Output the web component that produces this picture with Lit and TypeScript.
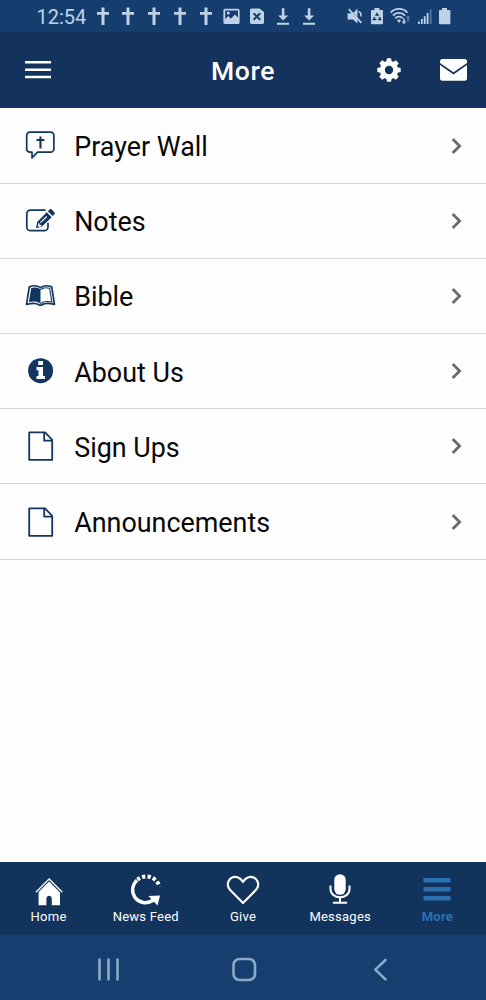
import { LitElement, html, css, svg } from "lit";
import { customElement } from "lit/decorators.js";

const statusIcon = (w: number, body: unknown) =>
  html`<svg width=${w} height="20" viewBox="0 0 ${w} 20" fill="currentColor">${body}</svg>`;

const cross = statusIcon(12, svg`<path d="M4.500 .5h3v4.500H12v2.800H7.500v10.300h-3V7.800H0V5h4.500z"/>`);
const picture = statusIcon(17, svg`<path fill-rule="evenodd" d="M2 1.800h13a1.600 1.600 0 0 1 1.600 1.600v12a1.600 1.600 0 0 1-1.600 1.600H2a1.600 1.600 0 0 1-1.600-1.600v-12A1.600 1.600 0 0 1 2 1.800zM2.200 3.500v8.700l3-3.200 2.600 2.700 4.200-4.200 3 3V3.500z"/><circle cx="5.300" cy="6" r="1.500"/>`);
const fileX = statusIcon(14, svg`<path d="M1.500 1.400h8L14 5v10.600a1.400 1.400 0 0 1-1.400 1.400H1.400A1.400 1.400 0 0 1 0 15.600V2.900a1.500 1.500 0 0 1 1.500-1.500z"/><path d="M3.600 6.200l6.600 6.600M10.200 6.200l-6.600 6.600" stroke="#153e6f" stroke-width="2"/>`);
const download = statusIcon(12, svg`<path d="M4.800 1.300h2.600v7.200h3.700L6.100 13.400 1.100 8.500h3.700zM0 15.800h12v1.900H0z"/>`);
const mute = statusIcon(16, svg`<path d="M.6 6.200h4.200l5.600 5.500v4.700L6 12.400H.6zM10.500 1.500v8.400L6.400 5.800z"/><path d="M1.800 2.200l12.600 13.600" fill="none" stroke="currentColor" stroke-width="1.700"/><path d="M11.600 4.500c1.800.8 2.800 2.700 2.200 5" fill="none" stroke="currentColor" stroke-width="1.500"/>`);
const recycle = statusIcon(12, svg`<path d="M3.500 1h5v2H11a1 1 0 0 1 1 1v12.300a1 1 0 0 1-1 1H1a1 1 0 0 1-1-1V4a1 1 0 0 1 1-1h2.500z"/><path d="M4.700 8.800L6 6.600l1.400 2.300M8.300 10.200l1.300 2.300H7M5.400 12.500h-3l1.400-2.400" fill="none" stroke="#153e6f" stroke-width="1.500"/>`);
const wifi = statusIcon(20, svg`<g fill="none" stroke="currentColor" stroke-width="1.700"><path d="M.6 5.600C5 .6 13 .6 17.400 5.600M3 8.600c3.200-3.700 8.800-3.700 12 0M5.300 11.400c2-2.300 5.400-2.300 7.400 0"/></g><path d="M7 13.200c1.200-1 2.800-1 4 0L9 15.900z"/><path d="M13.200 11.400h1.500v3h1.600l-2.300 2.900-2.400-2.900h1.600z"/><path d="M17.300 14.500h1.400v-3.200h1.200L18 8.600l-1.900 2.700h1.200z" opacity=".5"/>`);
const signal = statusIcon(14, svg`<path d="M0 14.500h1.800V17H0zM2.900 12h1.800v5H2.900zM5.800 9.300h1.800V17H5.800zM8.700 6h1.800v11H8.700z"/><path d="M11.800 2.400h1.700V17h-1.700z" opacity=".4"/>`);
const battery = statusIcon(12, svg`<path d="M3 1h5v2h2.400a1 1 0 0 1 1 1v12.200a1 1 0 0 1-1 1H1a1 1 0 0 1-1-1V4a1 1 0 0 1 1-1h2z"/>`);

const rowIcon = (body: unknown) =>
  html`<svg class="row-icon" width="33" height="34" viewBox="24 128 33 34" fill="currentColor">${body}</svg>`;

const page = rowIcon(svg`<g fill="none" stroke="currentColor" stroke-width="1.800" stroke-linejoin="round"><path d="M29.200 131.400H45l7.200 7.400v20H29.200z"/><path d="M44.200 131.400v8.300h8"/></g>`);

const rows = [
  { label: "Prayer Wall", icon: rowIcon(svg`<path d="M30 131.200h20.500a3.400 3.400 0 0 1 3.400 3.400v13.200a3.400 3.400 0 0 1-3.400 3.400H37.600L32 156.800v-5.600h-2a3.300 3.300 0 0 1-3.300-3.400v-13.200a3.300 3.300 0 0 1 3.300-3.400z" fill="none" stroke="currentColor" stroke-width="1.700" stroke-linejoin="round"/><path d="M39.400 135.400h2.100v2.700h2.900v1.800h-2.900v7.500h-2.100v-7.500h-2.900v-1.800h2.900z"/>`) },
  { label: "Notes", icon: rowIcon(svg`<path d="M45 134.100H30.600a3.800 3.800 0 0 0-3.800 3.800v13a3.800 3.800 0 0 0 3.800 3.800h13.600a3.800 3.800 0 0 0 3.800-3.800v-3.600" fill="none" stroke="currentColor" stroke-width="1.700" stroke-linecap="round"/><path fill-rule="evenodd" d="M46.700 136.300l5 4.900-9.800 9.400-5.900 1.700 1.200-6.200zM40 146.200l.8.800 6.300-6.100-.8-.8zM38.400 147l-.5 2.900 1.300 1.100 2.100-.8v-1.200l-1.700-.2-.2-1.600z"/><path d="M47.800 135.300l2-1.800c.6-.6 1.300-.5 1.900 0l2.600 2.700c.6.700.6 1.400 0 2l-1.700 1.900z"/>`) },
  { label: "Bible", icon: rowIcon(svg`<path d="M29.300 135.900c3.500-1.400 8-1.500 11.200.7 3.200-2.200 7.700-2.100 11.200-.7l2.800 17.600c-4.500-1.300-9.600-1.500-12.400.3-.6.500-2.600.5-3.200 0-2.800-1.800-7.900-1.600-12.400-.3z" fill="none" stroke="currentColor" stroke-width="1.700" stroke-linejoin="round"/><path d="M31.200 137c3.200-.9 6.700-.7 9.300 1.200v14.500c-3.200-2.500-7.300-2.600-11.600-1.700z"/><path d="M40.500 138.500c2.600-1.900 5.900-2.100 9.100-1.200l2.300 13.700c-4.100-.9-8.200-.8-11.400 1.700" fill="none" stroke="currentColor" stroke-width="1.100"/>`) },
  { label: "About Us", icon: rowIcon(svg`<circle cx="40.600" cy="144.700" r="12.500"/><path d="M38.300 135H43v4.100h-4.700zM36.500 141.100H43v8.800h2v3.200h-8.500v-3.200h2v-5.600h-2z" fill="#fff"/>`) },
  { label: "Sign Ups", icon: page },
  { label: "Announcements", icon: page },
];

const tabIcon = (body: unknown) =>
  html`<svg width="34" height="34" viewBox="0 0 34 34" fill="currentColor">${body}</svg>`;

const tabs = [
  { label: "Home", cls: "home", icon: tabIcon(svg`<path d="M3.900 20.300L17.100 7l13.200 13.300" fill="none" stroke="currentColor" stroke-width="1.300"/><path d="M17.100 9.500L28 20.500v12.700h-8.200V27c0-4.300-5.400-4.300-5.400 0v6.200H6.600V20.100z"/>`) },
  { label: "News Feed", cls: "feed", icon: tabIcon(svg`<path d="M8 8.300C-3.500 19.500 9.500 37.500 24.800 28" fill="none" stroke="currentColor" stroke-width="3.400"/><path d="M19.400 24.100L31 23.600l-2.500 9.900z"/><path d="M8.400 7.600A13.700 13.700 0 0 1 30.400 14.500" fill="none" stroke="currentColor" stroke-width="4" stroke-dasharray="3.200 2.200"/>`) },
  { label: "Give", cls: "give", icon: tabIcon(svg`<path d="M17 31L4.200 18.100C-1.400 11.400 4 4.700 9.500 4.900c3.600.1 5.600 2.300 7.500 5 1.900-2.700 3.900-4.900 7.500-5 5.500-.2 10.900 6.500 5.300 13.200z" fill="none" stroke="currentColor" stroke-width="2.100" stroke-linejoin="round"/>`) },
  { label: "Messages", cls: "msg", icon: tabIcon(svg`<rect x="11.300" y="2.200" width="11.400" height="20.600" rx="5.700"/><path d="M7.500 14.200v2.700c0 11 19 11 19 0v-2.700M17 25.500v4.800M10.700 30.700h12.600" fill="none" stroke="currentColor" stroke-width="2" stroke-linecap="round"/>`) },
  { label: "More", cls: "more", icon: tabIcon(svg`<path d="M3.500 6h27v4.400h-27zM3.500 15h27v4.400h-27zM3.500 24h27v4.400h-27z"/>`) },
];

@customElement("app-root")
export class AppRoot extends LitElement {
  static styles = css`
    :host { display: flex; flex-direction: column; height: 1000px; width: 486px; overflow: hidden; background: #fefefe; font-family: Roboto, sans-serif; }
    svg { display: block; flex: none; }
    .status { display: flex; align-items: center; height: 32px; background: #153e6f; color: #c0d2e8; }
    .time { width: 52.700px; padding: 1.500px 0 0 36.500px; margin-right: .5px; font-size: 20px; line-height: 32px; white-space: nowrap; }
    .notes { display: grid; grid-template-columns: repeat(9, 25.750px); justify-items: center; padding-top: 1px; }
    .system { display: flex; padding-left: 26px; gap: 7.500px; padding-top: 1px; }
    .header { display: grid; grid-template-columns: 72px 1fr 65px 65px; height: 76px; align-items: center; background: #13335d; color: #fff; }
    .header svg { justify-self: center; }
    .header .menu { margin-right: -4px; }
    .title { margin: 0; padding: 2px 0 0 58px; text-align: center; font-size: 26.500px; font-weight: 500; line-height: 36px; letter-spacing: .6px; }
    .list { flex: 1; margin: 0; padding: .5px 0 0; list-style: none; }
    .row { display: flex; align-items: center; box-sizing: border-box; height: 75.200px; padding: 0 24px; border-bottom: 1px solid #d6d6d6; color: #123660; }
    .label { flex: 1; margin-left: 17.200px; padding-top: 3px; color: #080808; font-size: 26.900px; line-height: 36px; }
    .tabs { display: grid; grid-template-columns: repeat(5, 1fr); height: 73px; background: #12345c; color: #fff; }
    .tab { display: flex; flex-direction: column; align-items: center; padding-top: 10px; gap: 2px; font-size: 13px; line-height: 18px; letter-spacing: .25px; }
    .tab.more { color: #2b70b1; font-weight: 700; }
    .nav { height: 65px; background: #163f70; color: #8ca9c9; }
  `;

  render() {
    return html`
      <div class="status">
        <span class="time">12:54</span>
        <div class="notes">${cross}${cross}${cross}${cross}${cross}${picture}${fileX}${download}${download}</div>
        <div class="system">${mute}${recycle}${wifi}${signal}${battery}</div>
      </div>
      <header class="header">
        <svg class="menu" width="26" height="20" viewBox="0 0 26 20"><path d="M0 1h26v2.600H0zM0 8.400h26V11H0zM0 15.700h26v2.600H0z" fill="#fff"/></svg>
        <h1 class="title">More</h1>
        <svg width="24" height="24" viewBox="-12 -12 24 24" fill="#fff">
          <circle r="6.700" fill="none" stroke="#fff" stroke-width="5"/>
          ${[0, 45, 90, 135, 180, 225, 270, 315].map((a) => svg`<path transform="rotate(${a})" d="M-2.800-8L-2-11.700h4L2.800-8z"/>`)}
        </svg>
        <svg width="27" height="22" viewBox="0 0 27 22" fill="#fff"><path d="M2.500 0h22A2.500 2.500 0 0 1 27 2.500v1.600l-13.500 9.200L0 4.100V2.500A2.500 2.500 0 0 1 2.500 0zM0 6.100l13.500 9.400L27 6.100v13.100a2.500 2.500 0 0 1-2.500 2.500h-22A2.500 2.500 0 0 1 0 19.200z"/></svg>
      </header>
      <ul class="list">
        ${rows.map((r) => html`<li class="row">${r.icon}<span class="label">${r.label}</span>
          <svg width="12" height="18" viewBox="0 0 12 18" fill="none" stroke="#6b6b6b" stroke-width="2.800"><path d="M2.700 2l6.900 7-6.900 7"/></svg></li>`)}
      </ul>
      <nav class="tabs">${tabs.map((t) => html`<div class="tab ${t.cls}">${t.icon}<span>${t.label}</span></div>`)}</nav>
      <footer class="nav">
        <svg width="486" height="65" viewBox="0 935 486 65" fill="none" stroke="currentColor" stroke-width="2.600" stroke-linecap="round" stroke-linejoin="round">
          <path d="M99.500 959.500v20M108.500 959.500v20M117.500 959.500v20M385.500 960l-10.200 9.600 10.200 9.800"/>
          <rect x="233.500" y="959" width="21.500" height="21" rx="6"/>
        </svg>
      </footer>
    `;
  }
}
